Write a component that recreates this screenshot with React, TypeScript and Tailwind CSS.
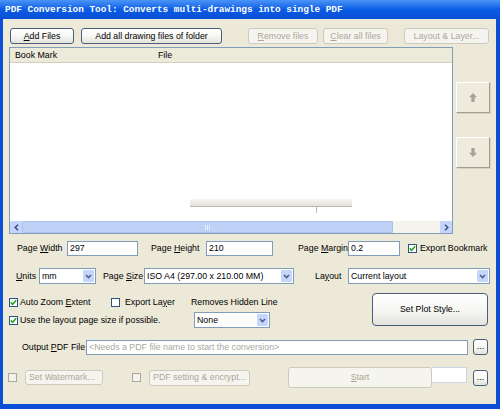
import React from "react";

type BtnProps = { className?: string; disabled?: boolean; children?: React.ReactNode };

const XpBtn = ({ className = "", disabled, children }: BtnProps) => (
  <div
    className={`flex shrink-0 items-center justify-center rounded-[3px] border whitespace-nowrap ${
      disabled
        ? "border-[#cdcbbf] text-[#aca899] bg-[#f5f4ee]"
        : "border-[#4b5d7c] text-black bg-gradient-to-b from-white via-[#f7f7f4] to-[#e4e3dc]"
    } ${className}`}
  >
    {children}
  </div>
);

const Check = ({ checked, disabled }: { checked?: boolean; disabled?: boolean }) => (
  <div
    className={`w-[9px] h-[9px] shrink-0 border flex items-center justify-center ${
      disabled ? "border-[#a9a899] bg-[#f3f2ec]" : "border-[#2a5580] bg-white"
    }`}
  >
    {checked && (
      <svg width="7" height="7" viewBox="0 0 7 7">
        <path d="M0.8 3.4 L2.7 5.3 L6.2 1.3" stroke="#22a322" strokeWidth="1.5" fill="none" />
      </svg>
    )}
  </div>
);

const Chevron = () => (
  <svg width="7" height="5" viewBox="0 0 7 5">
    <path d="M1 1 L3.5 3.6 L6 1" stroke="#4d6185" strokeWidth="1.5" fill="none" />
  </svg>
);

const Select = ({ className = "", value }: { className?: string; value: string }) => (
  <div className={`flex shrink-0 items-stretch border border-[#7f9db9] bg-white ${className}`}>
    <span className="flex-1 pl-[2px] flex items-center whitespace-nowrap overflow-hidden">{value}</span>
    <div className="w-[11px] m-[1px] rounded-[1px] bg-[#c5d5fb] flex items-center justify-center">
      <Chevron />
    </div>
  </div>
);

const Input = ({ className = "", value }: { className?: string; value?: string }) => (
  <div className={`flex shrink-0 items-center border border-[#7f9db9] bg-white pl-[2px] whitespace-nowrap overflow-hidden ${className}`}>{value}</div>
);

const Arrow = ({ down }: { down?: boolean }) => (
  <svg width="8" height="9" viewBox="0 0 8 9" className={down ? "rotate-180" : ""}>
    <path d="M4 0 L8 4.2 L5.6 4.2 L5.6 9 L2.4 9 L2.4 4.2 L0 4.2 Z" fill="#a4a297" />
  </svg>
);

const Label = ({ className = "", children }: { className?: string; children?: React.ReactNode }) => (
  <span className={`shrink-0 whitespace-nowrap ${className}`}>{children}</span>
);

export default function App() {
  return (
    <div className="w-[500px] h-[409px] flex flex-col bg-[#0b4fd6] overflow-hidden font-['Liberation_Sans',Arial,sans-serif] text-[8.8px] text-black leading-none whitespace-nowrap">
      {/* Title bar */}
      <div className="h-[19px] shrink-0 flex items-center pl-[5px] bg-gradient-to-b from-[#4a94f7] via-[#0a5ce6] to-[#0a4fd4]">
        <span className="font-['Liberation_Mono',monospace] font-bold text-[9.4px] text-white">
          PDF Conversion Tool: Converts multi-drawings into single PDF
        </span>
      </div>

      {/* Body */}
      <div className="flex-1 ml-[3px] mr-[4px] mb-[5px] bg-[#ece9d8] flex flex-col">
        {/* Row 1 buttons */}
        <div className="mt-[9px] flex h-[16px]">
          <XpBtn className="ml-[7px] w-[64px]">
            <span><u>A</u>dd Files</span>
          </XpBtn>
          <XpBtn className="ml-[7px] w-[141px]">Add all drawing files of folder</XpBtn>
          <XpBtn disabled className="ml-[26px] w-[70px]">
            <span><u>R</u>emove files</span>
          </XpBtn>
          <XpBtn disabled className="ml-[5px] w-[65px]">
            <span><u>C</u>lear all files</span>
          </XpBtn>
          <XpBtn disabled className="ml-[16px] w-[85px]">Layout &amp; Layer...</XpBtn>
        </div>

        {/* List + side buttons */}
        <div className="mt-[3px] flex">
          <div className="ml-[6px] w-[444px] h-[187px] border border-[#7f9db9] bg-white flex flex-col relative">
            <div className="h-[15px] flex items-center bg-[#ebeadb] border-b border-[#d3cfbf]">
              <span className="w-[148px] pl-[5px]">Book Mark</span>
              <span>File</span>
            </div>
            <div className="flex-1" />
            {/* ghost artifact */}
            <div className="absolute left-[180px] top-[151px] w-[162px] h-[8px] bg-gradient-to-b from-[#f6f6f1] to-[#e4e3d8] border-b border-[#b9b8aa]" />
            <div className="absolute left-[306px] top-[159px] w-[1px] h-[6px] bg-[#b9b8aa]" />
            {/* scrollbar */}
            <div className="h-[12px] flex bg-[#f4f3ec]">
              <div className="w-[12px] bg-[#c4d4fa] rounded-[1px] flex items-center justify-center">
                <svg width="5" height="7" viewBox="0 0 5 7">
                  <path d="M4 0.8 L1.2 3.5 L4 6.2" stroke="#34508a" strokeWidth="1.5" fill="none" />
                </svg>
              </div>
              <div className="w-[371px] bg-[#bfd1f7] border border-[#abc0ee] rounded-[1px] flex items-center justify-center">
                <div className="flex gap-[1px]">
                  <div className="w-[1px] h-[5px] bg-[#e8eefc]" />
                  <div className="w-[1px] h-[5px] bg-[#e8eefc]" />
                  <div className="w-[1px] h-[5px] bg-[#e8eefc]" />
                </div>
              </div>
              <div className="flex-1" />
              <div className="w-[12px] bg-[#c4d4fa] rounded-[1px] flex items-center justify-center">
                <svg width="5" height="7" viewBox="0 0 5 7">
                  <path d="M1 0.8 L3.8 3.5 L1 6.2" stroke="#34508a" strokeWidth="1.5" fill="none" />
                </svg>
              </div>
            </div>
          </div>
          <div className="ml-[3px] flex flex-col pt-[35px] gap-[24px]">
            <div className="w-[34px] h-[31px] flex items-center justify-center bg-[#eeebdd] border border-t-white border-l-white border-b-[#a09e92] border-r-[#a09e92] shadow-[1px_1px_0_#d6d3c6]">
              <Arrow />
            </div>
            <div className="w-[34px] h-[31px] flex items-center justify-center bg-[#eeebdd] border border-t-white border-l-white border-b-[#a09e92] border-r-[#a09e92] shadow-[1px_1px_0_#d6d3c6]">
              <Arrow down />
            </div>
          </div>
        </div>

        {/* Page width row */}
        <div className="mt-[7px] flex items-center h-[15px]">
          <Label className="ml-[14px] w-[50px]">Page <u>W</u>idth</Label>
          <Input className="w-[71px] h-[15px]" value="297" />
          <Label className="ml-[13px] w-[55px]">Page <u>H</u>eight</Label>
          <Input className="w-[67px] h-[15px]" value="210" />
          <Label className="ml-[25px] w-[50px]">Page <u>M</u>argin</Label>
          <Input className="w-[52px] h-[15px]" value="0.2" />
          <div className="ml-[8px]">
            <Check checked />
          </div>
          <Label className="ml-[3px]">Export Bookmark</Label>
        </div>

        {/* Units row */}
        <div className="mt-[12px] flex items-center h-[16px]">
          <Label className="ml-[13px] w-[23px]"><u>U</u>nits</Label>
          <Select className="w-[57px] h-[16px]" value="mm" />
          <Label className="ml-[7px] w-[41px]">Page <u>S</u>ize</Label>
          <Select className="w-[150px] h-[16px]" value="ISO A4 (297.00 x 210.00 MM)" />
          <Label className="ml-[21px] w-[33px]">La<u>y</u>out</Label>
          <Select className="w-[142px] h-[16px]" value="Current layout" />
        </div>

        {/* Options + plot style */}
        <div className="mt-[9px] flex">
          <div className="w-[369px] flex flex-col">
            <div className="mt-[3px] h-[12px] flex items-center">
              <div className="ml-[6px] w-[102px] flex items-center">
                <Check checked />
                <Label className="ml-[2px]">Auto Zoom <u>E</u>xtent</Label>
              </div>
              <div className="w-[80px] flex items-center">
                <Check />
                <Label className="ml-[5px]">Export La<u>y</u>er</Label>
              </div>
              <Label>Removes Hidden Line</Label>
            </div>
            <div className="mt-[4px] h-[16px] flex items-center">
              <div className="ml-[6px] w-[185px] flex items-center">
                <Check checked />
                <Label className="ml-[2px]">Use the layout page size if possible.</Label>
              </div>
              <Select className="w-[76px] h-[16px]" value="None" />
            </div>
          </div>
          <XpBtn className="w-[116px] h-[33px] rounded-[4px]">Set Plot Style...</XpBtn>
        </div>

        {/* Output row */}
        <div className="mt-[11px] flex items-center h-[16px]">
          <Label className="ml-[19px] w-[64px]">Output <u>P</u>DF File</Label>
          <Input className="w-[382px] h-[15px] text-[#a8a8a0]" value="<Needs a PDF file name to start the conversion>" />
          <XpBtn className="ml-[5px] w-[15px] h-[16px] rounded-[2px] items-end pb-[3px]">...</XpBtn>
        </div>

        {/* Bottom row */}
        <div className="mt-[12px] flex items-center h-[21px]">
          <div className="ml-[5px]">
            <Check disabled />
          </div>
          <XpBtn disabled className="ml-[8px] w-[78px] h-[15px] justify-start pl-[3px]">Set Watermark...</XpBtn>
          <div className="ml-[29px]">
            <Check disabled />
          </div>
          <XpBtn disabled className="ml-[8px] w-[101px] h-[16px]">PDF setting &amp; encrypt...</XpBtn>
          <XpBtn disabled className="ml-[38px] w-[144px] h-[21px]">
            <span><u>S</u>tart</span>
          </XpBtn>
          <div className="w-[35px] h-[16px] self-start bg-white border-r border-y border-[#c9d6e6]" />
          <XpBtn className="ml-[6px] w-[15px] h-[16px] rounded-[2px] items-end pb-[3px]">...</XpBtn>
        </div>
      </div>
    </div>
  );
}
